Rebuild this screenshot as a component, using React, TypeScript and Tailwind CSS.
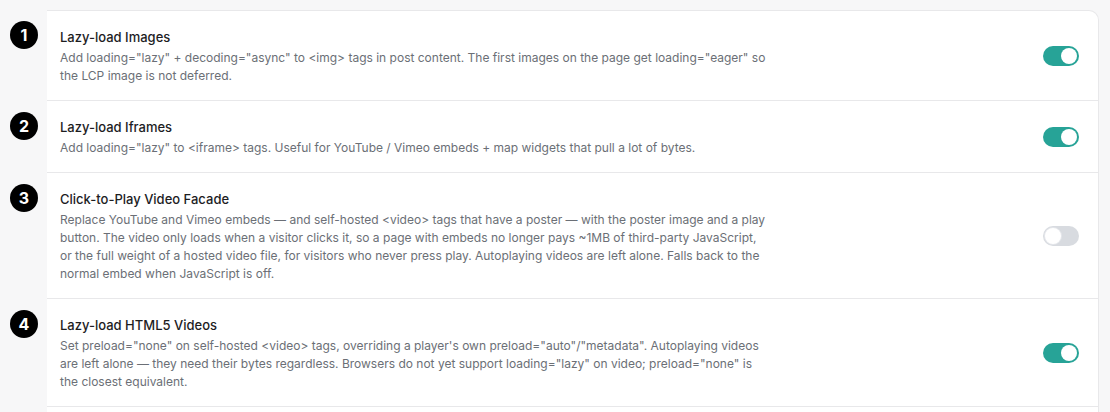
import type { ReactNode } from "react";

type Row = {
  n: number;
  title: string;
  lines: string[];
  on: boolean;
};

const rows: Row[] = [
  {
    n: 1,
    title: "Lazy-load Images",
    lines: [
      'Add loading="lazy" + decoding="async" to <img> tags in post content. The first images on the page get loading="eager" so',
      "the LCP image is not deferred.",
    ],
    on: true,
  },
  {
    n: 2,
    title: "Lazy-load Iframes",
    lines: [
      'Add loading="lazy" to <iframe> tags. Useful for YouTube / Vimeo embeds + map widgets that pull a lot of bytes.',
    ],
    on: true,
  },
  {
    n: 3,
    title: "Click-to-Play Video Facade",
    lines: [
      "Replace YouTube and Vimeo embeds — and self-hosted <video> tags that have a poster — with the poster image and a play",
      "button. The video only loads when a visitor clicks it, so a page with embeds no longer pays ~1MB of third-party JavaScript,",
      "or the full weight of a hosted video file, for visitors who never press play. Autoplaying videos are left alone. Falls back to the",
      "normal embed when JavaScript is off.",
    ],
    on: false,
  },
  {
    n: 4,
    title: "Lazy-load HTML5 Videos",
    lines: [
      'Set preload="none" on self-hosted <video> tags, overriding a player\'s own preload="auto"/"metadata". Autoplaying videos',
      'are left alone — they need their bytes regardless. Browsers do not yet support loading="lazy" on video; preload="none" is',
      "the closest equivalent.",
    ],
    on: true,
  },
];

const Toggle = ({ on }: { on: boolean }) =>
  on ? (
    <div className="flex h-5 w-9 shrink-0 items-center justify-end rounded-full bg-[#27a397] px-[2px]">
      <div className="h-4 w-4 rounded-full bg-white" />
    </div>
  ) : (
    <div className="flex h-5 w-9 shrink-0 items-center justify-start rounded-full bg-[#d8dbe0] px-[2px]">
      <div className="h-4 w-4 rounded-full bg-white shadow-[0_0_0_1px_#e5e7eb]" />
    </div>
  );

const Badge = ({ children }: { children: ReactNode }) => (
  <div className="grid h-7 w-7 place-items-center rounded-full bg-black text-[16px] font-bold text-white">
    {children}
  </div>
);

export default function App() {
  return (
    <div
      className="flex h-[412px] w-[1110px] flex-col overflow-hidden bg-[#f7f7f8] pt-[10px]"
      style={{ fontFamily: "Inter, 'Noto Sans', sans-serif" }}
    >
      {rows.map((row, i) => (
        <div key={row.n} className="flex">
          <div className="w-[47px] shrink-0 pl-[10px] pt-[11px]">
            <Badge>{row.n}</Badge>
          </div>
          <div
            className={`flex w-[1052px] items-center justify-between border-b border-r border-[#e8e8ea] bg-white pl-[13px] pr-[19px] ${
              i === 0 ? "rounded-tr-[10px] border-t" : ""
            }`}
          >
            <div className="pb-[15px] pt-4">
              <p className="text-[13px] font-medium leading-5 text-[#1d1d1f]">
                {row.title}
              </p>
              <div className="mt-[2px] text-[12px] leading-[18px] text-[#6b6f76]">
                {row.lines.map((l, j) => (
                  <p key={j} className="whitespace-nowrap">
                    {l}
                  </p>
                ))}
              </div>
            </div>
            <Toggle on={row.on} />
          </div>
        </div>
      ))}
      <div className="flex flex-1">
        <div className="w-[47px] shrink-0" />
        <div className="w-[1052px] border-r border-[#e8e8ea] bg-white" />
      </div>
    </div>
  );
}
